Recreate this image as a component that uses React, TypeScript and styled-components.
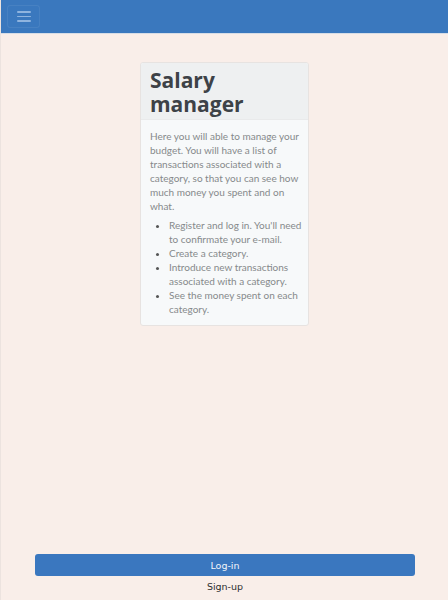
import styled, { createGlobalStyle } from "styled-components";

const GlobalStyle = createGlobalStyle`
  html, body {
    margin: 0;
    padding: 0;
    background: #f9eee9;
  }
  #root {
    min-height: 600px;
  }
`;

const Page = styled.div`
  height: 600px;
  display: flex;
  flex-direction: column;
  background: #f9eee9;
  border-left: 1px solid #ece3df;
  box-sizing: border-box;
  font-family: "Lato", "Open Sans", sans-serif;
`;

const Navbar = styled.header`
  height: 33px;
  background: #3a78be;
  border-bottom: 1px solid #d7dde6;
  display: flex;
  align-items: center;
  padding: 0 6px;
  flex-shrink: 0;
`;

const Toggler = styled.button`
  width: 33px;
  height: 23px;
  padding: 0;
  display: flex;
  flex-direction: column;
  justify-content: center;
  align-items: center;
  gap: 3px;
  background: transparent;
  border: 1px solid rgba(255, 255, 255, 0.07);
  border-radius: 3px;

  span {
    display: block;
    width: 14px;
    height: 1.5px;
    background: rgba(200, 220, 245, 0.6);
    border-radius: 1px;
  }
`;

const Main = styled.main`
  flex: 1;
  display: flex;
  justify-content: center;
  align-items: flex-start;
  padding-top: 28px;
`;

const Card = styled.section`
  width: 167px;
  border: 1px solid #e7e3e1;
  border-radius: 3px;
  background: #f7f9fa;
  overflow: hidden;
`;

const CardHeader = styled.div`
  background: #eef0f1;
  padding: 5px 9px 3px;
  border-bottom: 1px solid #e9eaeb;
`;

const Title = styled.h1`
  margin: 0;
  font-family: "Open Sans", "Noto Sans", sans-serif;
  font-size: 21px;
  line-height: 24px;
  font-weight: 700;
  color: #3d4247;
`;

const CardBody = styled.div`
  padding: 9px 6px 9px 9px;
  color: #86898b;
  font-size: 10px;
  line-height: 14px;
`;

const Text = styled.p`
  margin: 0 0 5px;
`;

const List = styled.ul`
  margin: 0;
  padding-left: 19px;

  li::marker {
    color: #555;
  }
`;

const Footer = styled.footer`
  display: flex;
  flex-direction: column;
  align-items: center;
  padding: 0 33px 5px 34px;
  gap: 3px;
`;

const LoginButton = styled.button`
  width: 100%;
  height: 22px;
  border: none;
  border-radius: 3px;
  background: #3a77bf;
  color: #f2f5fa;
  font-family: "DejaVu Sans", "Noto Sans", sans-serif;
  font-size: 9.5px;
`;

const SignupLink = styled.a`
  color: #2f2f2f;
  font-family: "DejaVu Sans", "Noto Sans", sans-serif;
  font-size: 9.5px;
  line-height: 16px;
  text-decoration: none;
`;

const steps = [
  "Register and log in. You'll need to confirmate your e-mail.",
  "Create a category.",
  "Introduce new transactions associated with a category.",
  "See the money spent on each category.",
];

export default function App() {
  return (
    <>
      <GlobalStyle />
      <Page>
        <Navbar>
          <Toggler aria-label="menu">
            <span />
            <span />
            <span />
          </Toggler>
        </Navbar>
        <Main>
          <Card>
            <CardHeader>
              <Title>Salary manager</Title>
            </CardHeader>
            <CardBody>
              <Text>
                Here you will able to manage your budget. You will have a list of
                transactions associated with a category, so that you can see how
                much money you spent and on what.
              </Text>
              <List>
                {steps.map((s) => (
                  <li key={s}>{s}</li>
                ))}
              </List>
            </CardBody>
          </Card>
        </Main>
        <Footer>
          <LoginButton>Log-in</LoginButton>
          <SignupLink href="#">Sign-up</SignupLink>
        </Footer>
      </Page>
    </>
  );
}
